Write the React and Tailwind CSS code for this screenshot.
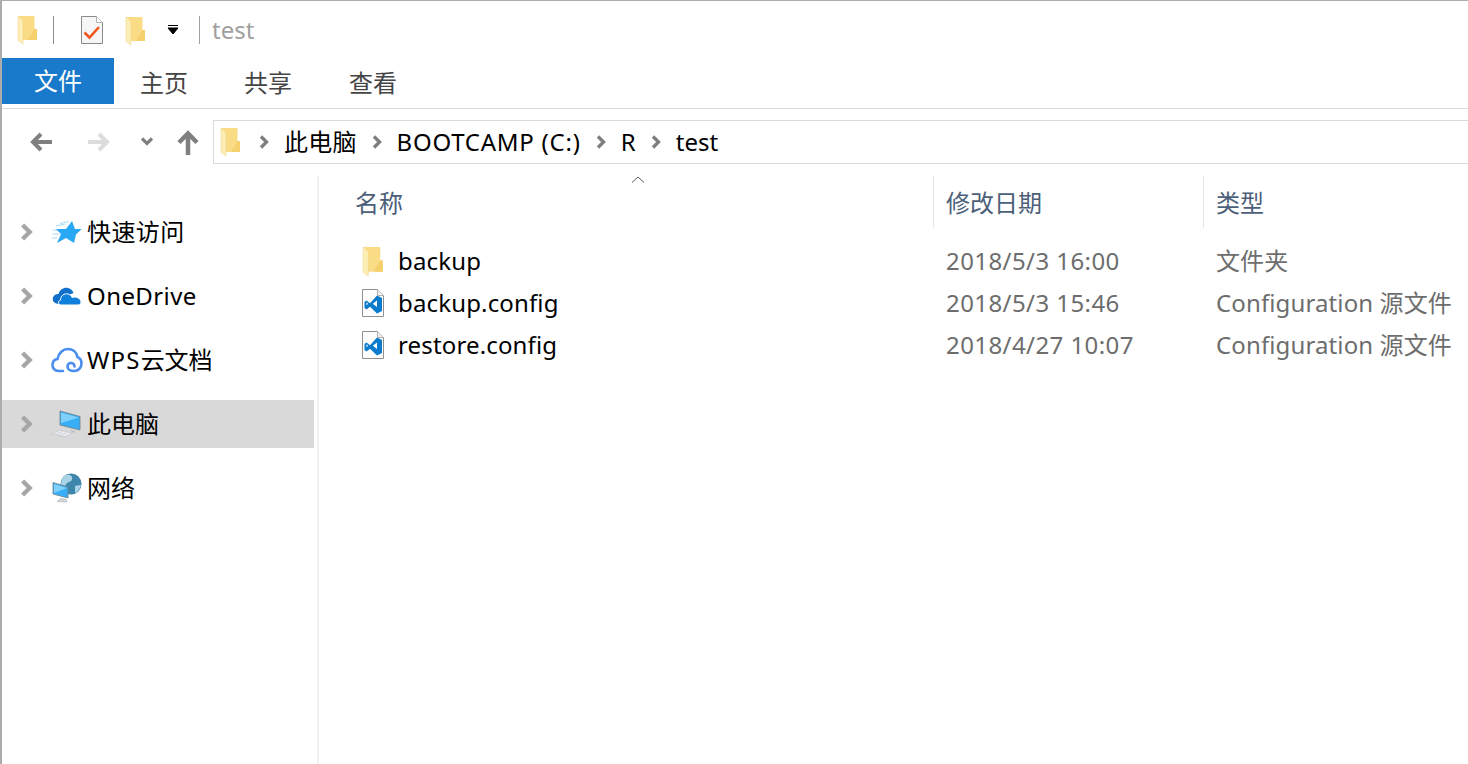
const FONT = "font-['Noto_Sans','Noto_Sans_CJK_SC',sans-serif]";

function Folder({ className }) {
    return (
        <svg viewBox="0 0 20 28" className={className}>
            <path d="M1 0h16.500v13H20v11H5V4z" fill="#f9dc85" />
            <path d="M17.500 13H20v11H11z" fill="#f6d06c" />
            <path d="M1 0l5 4.500V28l-5-3.500z" fill="#fdeeb6" stroke="#ecd085" strokeWidth="0.5" />
        </svg>
    );
}

function Chev({ className }) {
    return (
        <svg viewBox="0 0 10 14" className={className}>
            <path d="M2 1.500L7.500 7 2 12.500" fill="none" stroke="currentColor" strokeWidth="3.400" />
        </svg>
    );
}

function TaskIcon() {
    return (
        <svg viewBox="0 0 22 28" className="w-[22px] h-[28px]">
            <path d="M.5.5h15l6 6v21H.5z" fill="#f6f6f6" stroke="#8a8a8a" />
            <path d="M15.500.5v6h6" fill="#fff" stroke="#b0b0b0" />
            <path d="M3.500 16.500l5 5L18 11" fill="none" stroke="#f0561d" strokeWidth="2.600" />
        </svg>
    );
}

function VsFile() {
    return (
        <svg viewBox="0 0 22 28" className="w-[22px] h-[28px]">
            <path d="M.5.5h15l6 6v21H.5z" fill="#fdfdfd" stroke="#909090" />
            <path d="M15.500.5v6h6" fill="#f0f0f0" stroke="#b0b0b0" />
            <path d="M15 6.500l5 2.500v13l-5 2.500-7-6.700-3.500 2.700L2.500 19v-6l2-1.500 3.500 2.700zM15 11.500l-4.200 3.200 4.200 3.300zM4.500 13.200v3.200l1.600-1.600z" fill="#0a7bcc" fillRule="evenodd" />
        </svg>
    );
}

function StarIcon() {
    return (
        <svg viewBox="0 0 30 26" className="w-[30px] h-[26px]">
            <path d="M4 7l9-2M8 4.500l9-2M0 19h5M1 15h6M1 11h5" stroke="#a6d8f8" strokeWidth="1" />
            <path d="M20 2l3 8h6.700L24 15.500 22 24l-8-5-9 5 4-9-5-5h10z" fill="#29a8f4" />
        </svg>
    );
}

function OneDriveIcon() {
    return (
        <svg viewBox="0 0 30 20" className="w-[30px] h-[20px]">
            <path d="M8 18C2 18 0 14.500 1 11.500 2 8.500 5 8 6.500 8 8 3 12.500 1 16 2c3 .8 5 3 5.500 5L12 11 9 18z" fill="#0f6fc9" />
            <path d="M9 19c-3 0-3.500-4.500-.5-5 0-4 3.500-7 7.500-6 2 .5 3.500 2 4 3.500 4-1.500 9 1 9 4.500 0 2-1 3-3 3z" fill="#0f7fdc" stroke="#fff" strokeWidth="1" />
        </svg>
    );
}

function WpsIcon() {
    return (
        <svg viewBox="0 0 32 26" className="w-[32px] h-[26px]">
            <path d="M12 24H7.500C3.500 24 1.500 21 1.500 18c0-3 2-5.500 5-6C7.500 6 12 2 17 2c4.500 0 8.500 3 9.500 8 2.500 1 4 3.500 4 6.500 0 4-3 7.500-7.500 7.500-4 0-6.500-2-6.500-4.500 0-2 1.500-3.500 3.500-3.500s3.500 1.500 3.500 3.500" fill="none" stroke="#4a8df0" strokeWidth="2.600" strokeLinecap="round" />
        </svg>
    );
}

function PcIcon() {
    return (
        <svg viewBox="0 0 32 28" className="w-[32px] h-[28px]">
            <path d="M9 1l20 5.500V20L9 15z" fill="#37aef5" stroke="#6f7f8c" strokeWidth="0.8" />
            <path d="M10 2.500l18 5-18 5.500z" fill="#7fd0fb" />
            <path d="M0 24l9-4 12 3-7 4z" fill="#eceef0" stroke="#c2c5c9" strokeWidth="0.8" />
            <path d="M4 23.500l9 2M7 22l9 2.500M3 25l9-4M8 26l8-4" stroke="#cdd0d3" strokeWidth="0.6" />
            <path d="M19 20l6 1.500-3 1.500z" fill="#b8bcc0" />
        </svg>
    );
}

function NetIcon() {
    return (
        <svg viewBox="0 0 30 30" className="w-[30px] h-[30px]">
            <circle cx="19" cy="11" r="10.500" fill="#3f86ad" />
            <path d="M13 2.500c5-2 8 1 7 4s-5 2-6 5-3 2-5 0c0-4 1-7 4-9zM23 13c3-1 5-1 6-1-1 4-3 7-6 8z" fill="#a9d3e6" />
            <path d="M1 9.500L16 14v11L1 21z" fill="#37aef5" stroke="#6f7f8c" strokeWidth="0.8" />
            <path d="M2 11l13 4-13 5z" fill="#7fd0fb" />
            <path d="M5 28.500l4-3 5 1 1 2.500z" fill="#d6d8da" stroke="#a8aaac" strokeWidth="0.6" />
        </svg>
    );
}

const navItems = [
    { label: <span className="tracking-[0.4px]">快速访问</span>, key: 'quick', icon: <StarIcon /> },
    { label: <span className="tracking-[0.4px]">OneDrive</span>, key: 'onedrive', icon: <OneDriveIcon /> },
    { label: <><span className="tracking-[1.2px]">WPS</span>云文档</>, key: 'wps', icon: <WpsIcon /> },
    { label: '此电脑', key: 'pc', icon: <PcIcon />, active: true },
    { label: '网络', key: 'net', icon: <NetIcon /> },
];

const files = [
    { name: 'backup', date: '2018/5/3 16:00', type: '文件夹', icon: <Folder className="w-[21px] h-[29px]" /> },
    { name: 'backup.config', date: '2018/5/3 15:46', type: 'Configuration 源文件', icon: <VsFile /> },
    { name: 'restore.config', date: '2018/4/27 10:07', type: 'Configuration 源文件', icon: <VsFile /> },
];

const crumbs = [
    { text: '此电脑', cls: 'tracking-[0.2px]' },
    { text: 'BOOTCAMP (C:)', cls: 'tracking-[0.75px]' },
    { text: 'R', cls: 'tracking-[0.3px]' },
    { text: 'test', cls: '' },
];

export default function App() {
    return (
        <div className={`${FONT} w-[1468px] h-[764px] overflow-hidden bg-white border-l-2 border-t border-[#acacac] flex flex-col text-[24px] leading-[32px]`}>
            {/* quick access bar */}
            <div className="h-[57px] flex items-center shrink-0">
                <Folder className="w-[20px] h-[28px] ml-[15px]" />
                <div className="w-px h-[28px] bg-[#8c8c8c] ml-[16px]" />
                <div className="ml-[27px]"><TaskIcon /></div>
                <Folder className="w-[20px] h-[28px] ml-[22px] mt-[3px]" />
                <svg viewBox="0 0 12 10" className="w-[12px] h-[10px] ml-[22px] mt-[1px]">
                    <path d="M1 .5h10M1 3h10L6 9z" fill="#000" stroke="#000" strokeWidth="1" />
                </svg>
                <div className="w-px h-[28px] bg-[#a0a0a0] ml-[20px]" />
                <span className="ml-[12px] text-[#a0a0a0]">test</span>
            </div>

            {/* ribbon tabs */}
            <div className="h-[51px] flex shrink-0 border-b border-[#dadada]">
                <div className="w-[112px] h-[46px] bg-[#1979ca] text-white flex items-center justify-center">文件</div>
                <div className="h-[50px] pt-[9px] text-[#444] ml-[26px]">主页</div>
                <div className="h-[50px] pt-[9px] text-[#444] ml-[56px]">共享</div>
                <div className="h-[50px] pt-[9px] text-[#444] ml-[57px]">查看</div>
            </div>

            {/* navigation bar */}
            <div className="h-[67px] flex items-center shrink-0 pb-[2px]">
                <svg viewBox="0 0 24 20" className="w-[24px] h-[20px] ml-[27px] text-[#7f7f7f]">
                    <path d="M23 10H4M12 2l-8 8 8 8" fill="none" stroke="currentColor" strokeWidth="4" />
                </svg>
                <svg viewBox="0 0 24 20" className="w-[24px] h-[20px] ml-[34px] text-[#dcdcdc]">
                    <path d="M1 10h19M12 2l8 8-8 8" fill="none" stroke="currentColor" strokeWidth="4" />
                </svg>
                <svg viewBox="0 0 12 9" className="w-[12px] h-[9px] ml-[30px] text-[#808080]">
                    <path d="M1 1.500l5 5 5-5" fill="none" stroke="currentColor" strokeWidth="3.200" />
                </svg>
                <svg viewBox="0 0 24 26" className="w-[24px] h-[26px] ml-[23px] mt-[2px] text-[#7f7f7f]">
                    <path d="M12 25V4M3 12.500l9-9 9 9" fill="none" stroke="currentColor" strokeWidth="4.500" />
                </svg>
                <div className="ml-[13px] flex-1 h-[44px] border border-[#d9d9d9] border-r-0 flex items-center text-black">
                    <Folder className="w-[20px] h-[28px] ml-[6px] mr-[4px]" />
                    {crumbs.map((c) => (
                        <div key={c.text} className="flex items-center">
                            <Chev className="w-[10px] h-[14px] text-[#7f7f7f] mx-[15px]" />
                            <span className={`whitespace-nowrap ${c.cls}`}>{c.text}</span>
                        </div>
                    ))}
                </div>
            </div>

            <div className="flex flex-1 min-h-0">
                {/* sidebar */}
                <div className="w-[315px] shrink-0 border-r-2 border-[#f2f2f2] pt-[32px] box-content">
                    <div className="w-[312px] flex flex-col gap-[16px]">
                        {navItems.map((item) => (
                            <div key={item.key} className={`h-[48px] flex items-center text-black ${item.active ? 'bg-[#d9d9d9]' : ''}`}>
                                <Chev className="w-[13px] h-[18px] text-[#a6a6a6] ml-[18px] shrink-0" />
                                <div className="w-[34px] ml-[17px] flex justify-center shrink-0 mr-[3px]">{item.icon}</div>
                                <span className="whitespace-nowrap">{item.label}</span>
                            </div>
                        ))}
                    </div>
                </div>

                {/* file list */}
                <div className="flex-1 min-w-0">
                    <div className="relative h-[52px] flex text-[#4c607a]">
                        <svg viewBox="0 0 14 7" className="absolute left-[312px] top-0 w-[14px] h-[7px] text-[#555]">
                            <path d="M1 6.500L7 1l6 5.500" fill="none" stroke="currentColor" strokeWidth="1" />
                        </svg>
                        <div className="w-[614px] pl-[36px] pt-[11px]">名称</div>
                        <div className="w-[270px] pl-[12px] pt-[11px] border-l border-[#e5e5e5]">修改日期</div>
                        <div className="flex-1 pl-[12px] pt-[11px] border-l border-[#e5e5e5]">类型</div>
                    </div>
                    <div className="flex flex-col mt-[12px]">
                        {files.map((f) => (
                            <div key={f.name} className="h-[42px] flex items-center">
                                <div className="w-[79px] pl-[43px] shrink-0">{f.icon}</div>
                                <div className="w-[548px] shrink-0 text-black whitespace-nowrap tracking-[0.15px]">{f.name}</div>
                                <div className="w-[270px] shrink-0 text-[#6d6d6d] whitespace-nowrap tracking-[0.42px]">{f.date}</div>
                                <div className="text-[#6d6d6d] whitespace-nowrap tracking-[0.12px]">{f.type}</div>
                            </div>
                        ))}
                    </div>
                </div>
            </div>
        </div>
    );
}
